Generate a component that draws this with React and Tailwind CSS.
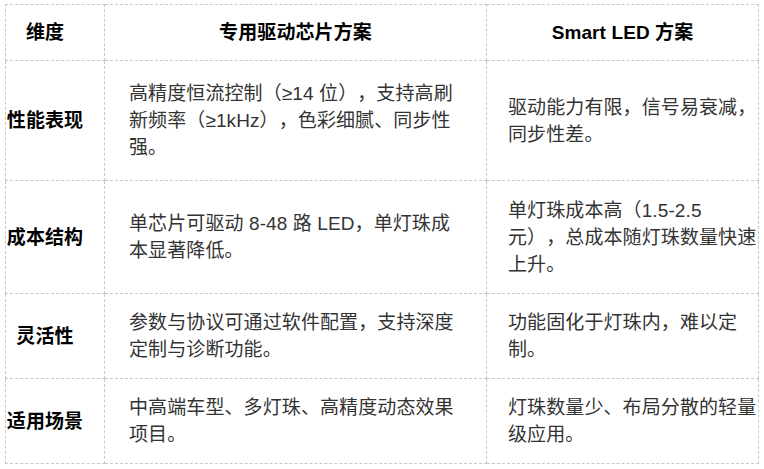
import React from "react";

const rows = [
    {
        name: "性能表现",
        h: "h-[120px]",
        chip: ["高精度恒流控制（≥14 位），支持高刷", "新频率（≥1kHz），色彩细腻、同步性", "强。"],
        smart: ["驱动能力有限，信号易衰减，", "同步性差。"],
    },
    {
        name: "成本结构",
        h: "h-[113px]",
        chip: ["单芯片可驱动 8-48 路 LED，单灯珠成", "本显著降低。"],
        smart: ["单灯珠成本高（1.5-2.5", "元），总成本随灯珠数量快速", "上升。"],
    },
    {
        name: "灵活性",
        h: "h-[85px]",
        chip: ["参数与协议可通过软件配置，支持深度", "定制与诊断功能。"],
        smart: ["功能固化于灯珠内，难以定", "制。"],
    },
    {
        name: "适用场景",
        h: "h-[85px]",
        chip: ["中高端车型、多灯珠、高精度动态效果", "项目。"],
        smart: ["灯珠数量少、布局分散的轻量", "级应用。"],
    },
];

const Lines = ({ lines }) => (
    <div>
        {lines.map((l, i) => (
            <div key={i} className="whitespace-nowrap">{l}</div>
        ))}
    </div>
);

const App = () => {
    return (
        <div className="w-[764px] h-[469px] overflow-hidden bg-white pt-[4px] pl-[5px] font-['Liberation_Sans','Noto_Sans_CJK_SC',sans-serif] text-[19px] tracking-[0.1px] leading-[27px] [text-spacing-trim:space-all]">
            <table className="table-fixed border-collapse w-[753px]">
                <colgroup>
                    <col className="w-[99px]" />
                    <col className="w-[382px]" />
                    <col className="w-[272px]" />
                </colgroup>
                <thead>
                    <tr className="h-[56px]">
                        <th className="border border-dashed border-[#c8c8c8] p-0 pr-5 text-center font-bold text-black">维度</th>
                        <th className="border border-dashed border-[#c8c8c8] p-0 text-center font-bold text-black">专用驱动芯片方案</th>
                        <th className="border border-dashed border-[#c8c8c8] p-0 text-center font-bold text-black">Smart LED 方案</th>
                    </tr>
                </thead>
                <tbody>
                    {rows.map((r) => (
                        <tr key={r.name} className={r.h}>
                            <td className="border border-dashed border-[#c8c8c8] p-0 pr-5 text-center align-middle font-bold text-black whitespace-nowrap">
                                {r.name}
                            </td>
                            <td className="border border-dashed border-[#c8c8c8] p-0 pl-6 align-middle text-[#333]">
                                <Lines lines={r.chip} />
                            </td>
                            <td className="border border-dashed border-[#c8c8c8] p-0 pl-[21px] align-middle text-[#333]">
                                <Lines lines={r.smart} />
                            </td>
                        </tr>
                    ))}
                </tbody>
            </table>
        </div>
    );
};

export default App;
